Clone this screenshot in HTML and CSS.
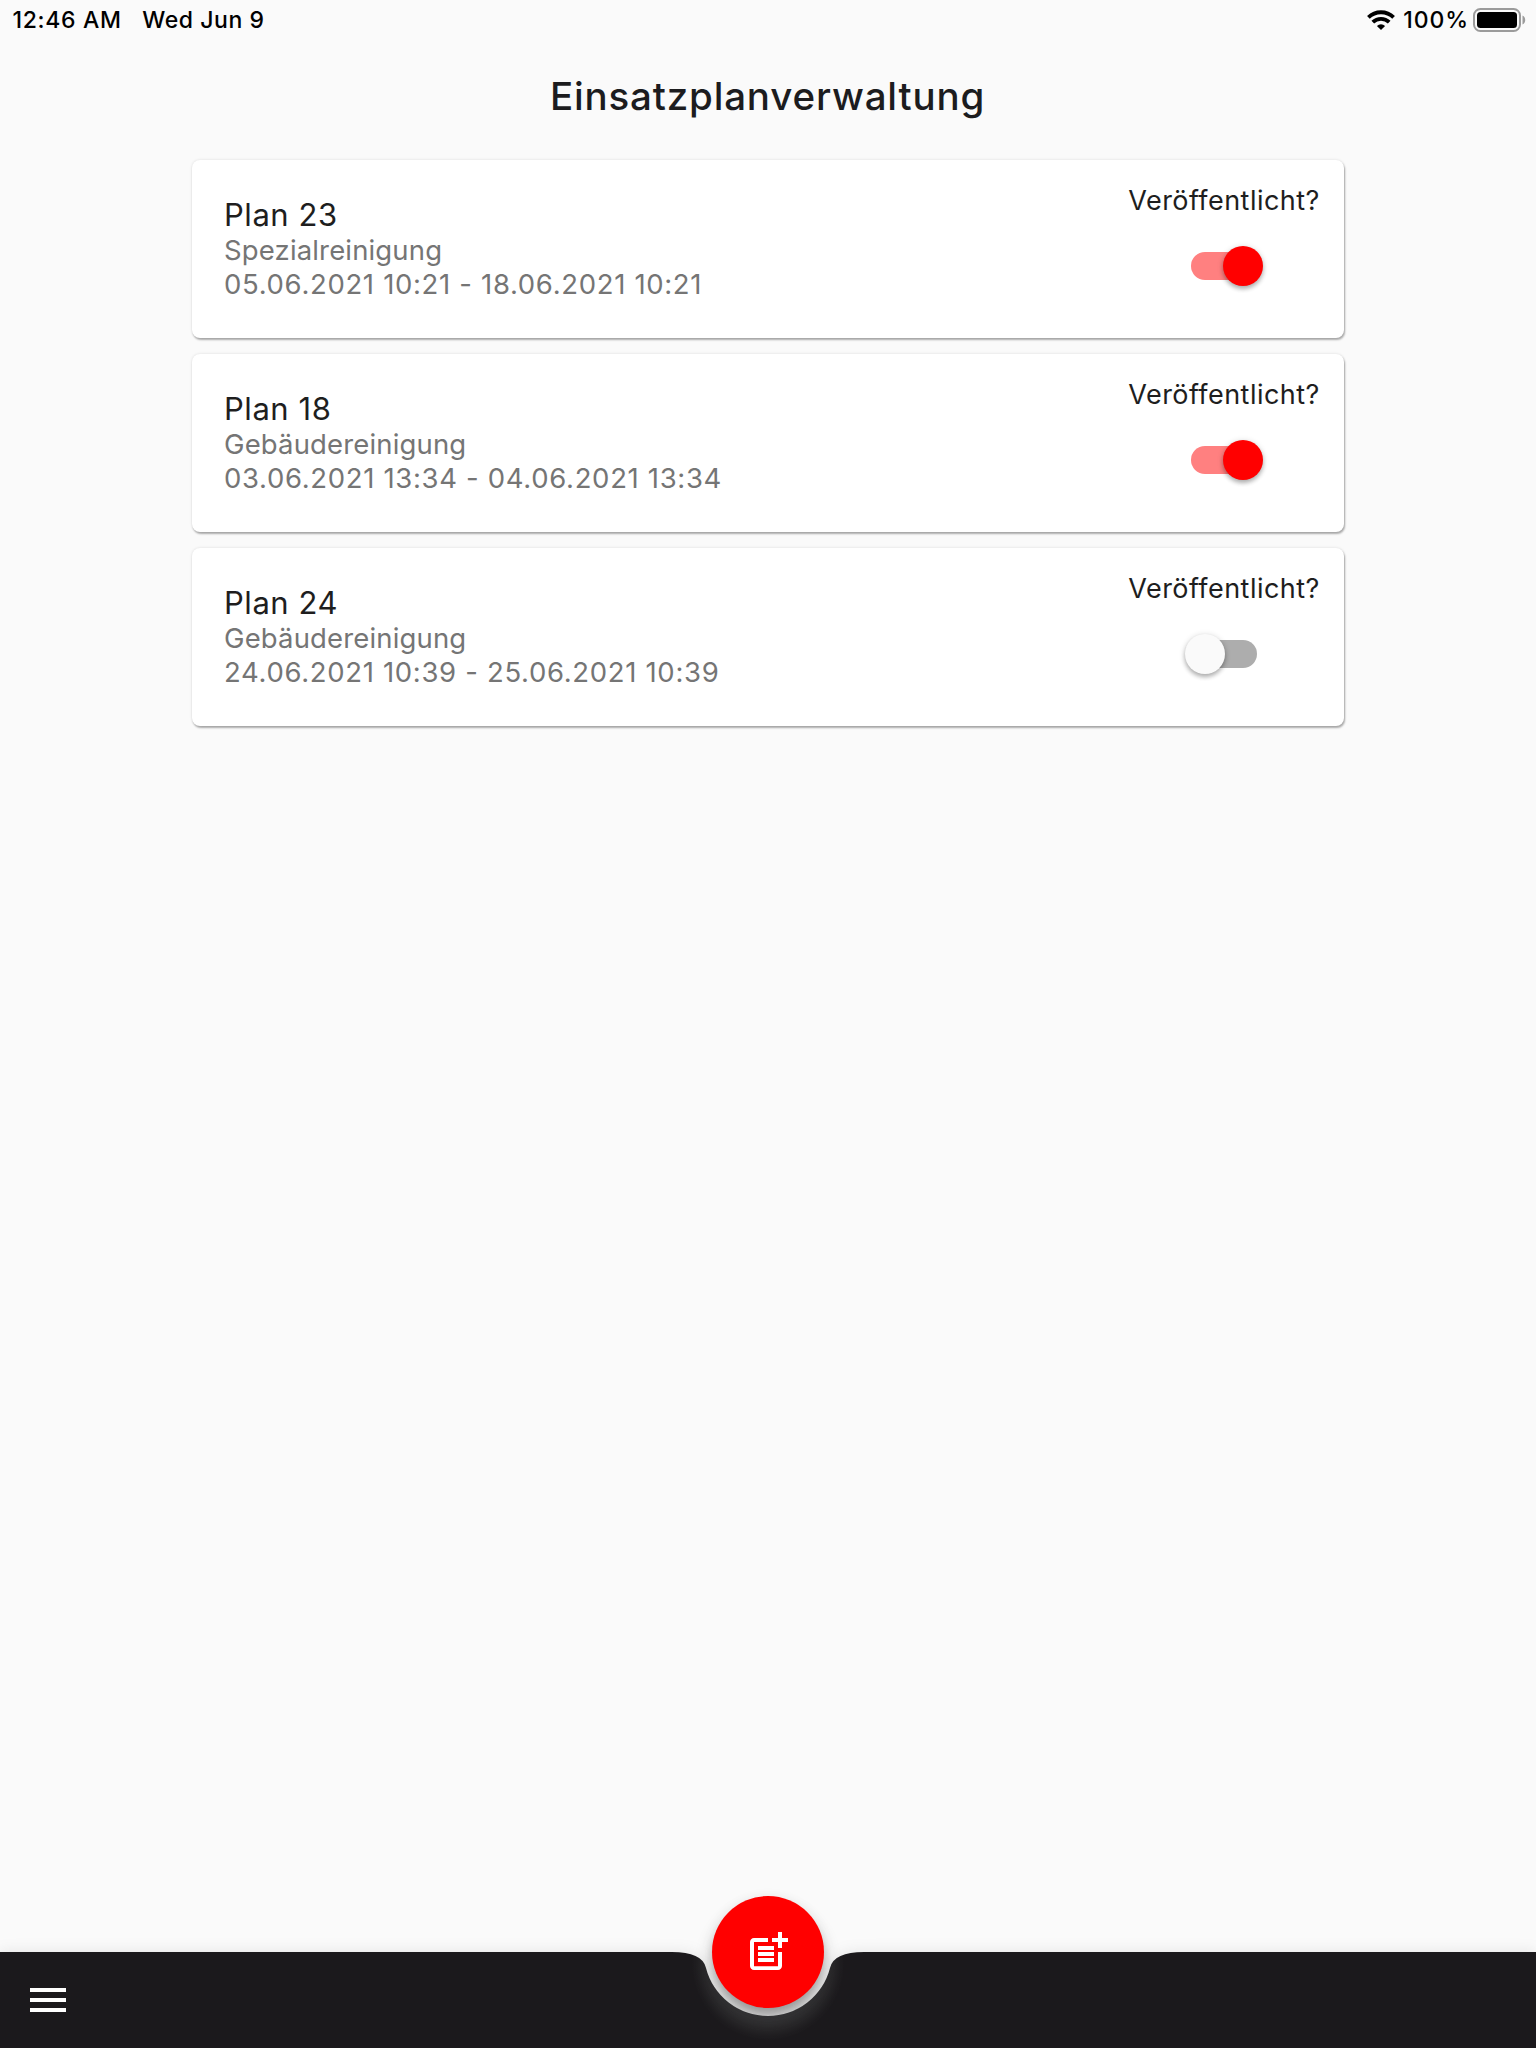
FILE: index.html
```html
<!DOCTYPE html>
<html lang="de">
<head>
<meta charset="utf-8">
<title>Einsatzplanverwaltung</title>
<link rel="stylesheet" href="styles.css">
</head>
<body>
<div class="screen">
  <header class="status">
    <div class="status-left"><span class="time">12:46 AM</span><span class="date">Wed Jun 9</span></div>
    <div class="status-right">
      <svg class="wifi" width="28" height="20" viewBox="0 0 28 20" aria-hidden="true">
        <g fill="none" stroke="#000" stroke-width="3.8">
          <path d="M1.4 7.4a18 18 0 0 1 25.2 0"/>
          <path d="M5.8 12.200a11.6 11.6 0 0 1 16.4 0"/>
        </g>
        <path d="M14 20l-4.1-4.1a6 6 0 0 1 8.2 0z"/>
      </svg>
      <span class="percent">100%</span>
      <svg class="battery" width="54" height="24" viewBox="0 0 54 24" aria-hidden="true">
        <rect x="1" y="1" width="46" height="22" rx="6.5" fill="none" stroke="#9b9b9b" stroke-width="2"/>
        <rect x="4" y="4" width="40" height="16" rx="3.5"/>
        <path d="M49.500 7.500c3.600 1.500 3.600 7.500 0 9z" fill="#9b9b9b"/>
      </svg>
    </div>
  </header>
  <h1 class="title">Einsatzplanverwaltung</h1>
  <main class="plans">
    <article class="card">
      <div class="info">
        <h2 class="name">Plan 23</h2>
        <p class="detail">Spezialreinigung</p>
        <p class="detail period">05.06.2021 10:21 - 18.06.2021 10:21</p>
      </div>
      <div class="publish"><span class="label">Veröffentlicht?</span><span class="switch on"><span class="thumb"></span></span></div>
    </article>
    <article class="card">
      <div class="info">
        <h2 class="name">Plan 18</h2>
        <p class="detail">Gebäudereinigung</p>
        <p class="detail period">03.06.2021 13:34 - 04.06.2021 13:34</p>
      </div>
      <div class="publish"><span class="label">Veröffentlicht?</span><span class="switch on"><span class="thumb"></span></span></div>
    </article>
    <article class="card">
      <div class="info">
        <h2 class="name">Plan 24</h2>
        <p class="detail">Gebäudereinigung</p>
        <p class="detail period">24.06.2021 10:39 - 25.06.2021 10:39</p>
      </div>
      <div class="publish"><span class="label">Veröffentlicht?</span><span class="switch"><span class="thumb"></span></span></div>
    </article>
  </main>
  <footer class="bar">
    <svg class="bar-shape" width="1536" height="96" viewBox="0 0 1536 96" aria-hidden="true">
      <defs>
        <radialGradient id="glow" gradientUnits="userSpaceOnUse" cx="768" cy="12" r="76">
          <stop offset=".66" stop-color="#3c3c3e"/>
          <stop offset=".84" stop-color="#29282a"/>
          <stop offset="1" stop-color="#1b191c"/>
        </radialGradient>
      </defs>
      <path d="M0 0H672Q702 0 705.94 15.640A64 64 0 0 0 830.060 15.640Q834 0 864 0H1536V96H0z" fill="url(#glow)"/>
    </svg>
    <svg class="menu" width="48" height="48" viewBox="0 0 24 24" aria-hidden="true"><path d="M3 18h18v-2H3v2zm0-5h18v-2H3v2zm0-7v2h18V6H3z" fill="#fff"/></svg>
    <div class="fab">
      <svg width="48" height="48" viewBox="0 0 24 24" fill="#fff" aria-hidden="true">
        <path d="M17 19.100H5V7h7V5H5c-1.100 0-2 .9-2 2v12c0 1.100.9 2 2 2h12c1.100 0 2-.9 2-2v-7h-2v7.100z"/>
        <path d="M19 2h-2v3h-3v2h3v3h2V7h3V5h-3V2zM7 9h8v2H7zM7 12h8v2H7zM7 15h8v2H7z"/>
      </svg>
    </div>
  </footer>
</div>
</body>
</html>
```
FILE: styles.css
```css
* { box-sizing: border-box; margin: 0; padding: 0; }
body { background: #fafafa; font-family: Inter, "Liberation Sans", sans-serif; color: #1c1c1e; }
.screen { width: 1536px; height: 2048px; display: flex; flex-direction: column; overflow: hidden; }
.status { height: 40px; display: flex; justify-content: space-between; padding: 0 9px 0 12.5px; font-size: 23px; font-weight: 500; line-height: 40px; color: #000; white-space: nowrap; }
.status-left { display: flex; gap: 20.5px; }
.time { letter-spacing: 0.7px; }
.date { letter-spacing: 0.55px; }
.percent { letter-spacing: 0.9px; }
.status-right { display: flex; align-items: flex-start; }
.wifi { margin: 10px 8px 0 0; }
.battery { margin: 8px 0 0 4px; }
.title { height: 112px; padding-right: 1px; text-align: center; font-size: 38.5px; font-weight: 500; line-height: 112px; letter-spacing: 0.83px; }
.plans { flex: 1; display: flex; flex-direction: column; gap: 16px; padding: 8px 192px 0; }
.card { height: 178px; display: flex; justify-content: space-between; padding: 24px 24px 0 32px; background: #fff; border-radius: 8px; box-shadow: 1px 2px 2px rgba(0,0,0,.3), 0 0 3px rgba(0,0,0,.12); }
.info { padding-top: 12px; white-space: nowrap; }
.name { font-size: 31px; font-weight: 400; line-height: 37px; letter-spacing: 0.55px; color: #1e1e1e; }
.detail { font-size: 27.5px; line-height: 34px; letter-spacing: 0.15px; color: #757575; }
.period { letter-spacing: 0.67px; }
.publish { display: flex; flex-direction: column; align-items: center; width: 192px; white-space: nowrap; }
.label { font-size: 27px; line-height: 34px; letter-spacing: 0.45px; color: #1e1e1e; }
.switch { display: flex; align-items: center; width: 66px; height: 28px; margin: 34px 0 0; border-radius: 14px; background: #adadad; }
.thumb { flex: none; width: 40px; height: 40px; margin-left: -6px; border-radius: 50%; background: #fafafa; box-shadow: 0 3px 4px rgba(0,0,0,.24), 0 1px 6px rgba(0,0,0,.16); }
.switch.on { background: #ff8080; }
.switch.on .thumb { margin-left: 32px; background: #f00; }
.bar { position: relative; height: 96px; display: flex; align-items: center; padding-left: 24px; }
.bar-shape { position: absolute; inset: 0; overflow: visible; filter: drop-shadow(0 -1px 7px rgba(0,0,0,.08)); }
.menu { position: relative; }
.fab { position: absolute; left: 712px; top: -56px; width: 112px; height: 112px; display: flex; align-items: center; justify-content: center; border-radius: 50%; background: #f00; box-shadow: 0 8px 10px -2px rgba(0,0,0,.22), 0 12px 18px rgba(40,40,42,.24), 0 2px 14px rgba(0,0,0,.06); }
```
